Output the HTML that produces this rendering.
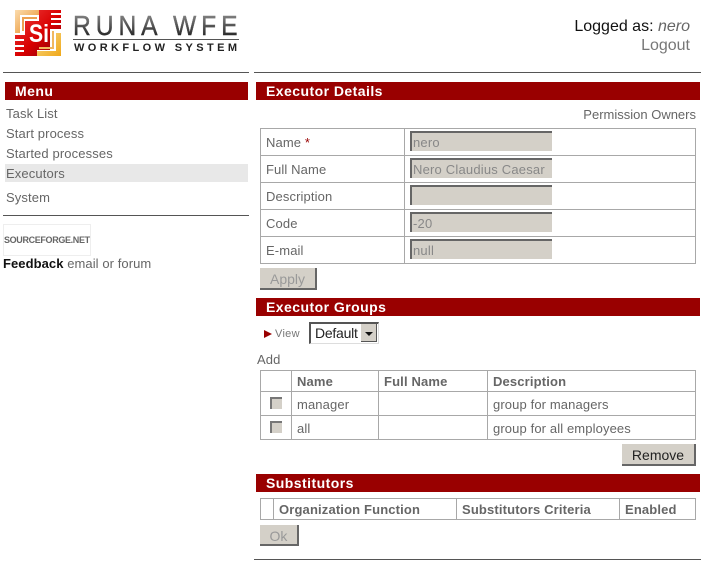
<!DOCTYPE html>
<html><head><meta charset="utf-8"><style>
html,body{margin:0;padding:0;background:#fff;width:707px;height:567px;overflow:hidden}
body{position:relative;font-family:"Liberation Sans",sans-serif;font-size:13px;color:#666}
.a{position:absolute;white-space:nowrap}
.t{position:absolute;white-space:nowrap;letter-spacing:.12px;line-height:14px;margin-top:1px}
.hr{position:absolute;height:1px;background:#555}
.bar{position:absolute;background:#990000;height:18px;color:#fff;font-weight:bold;font-size:14px;line-height:18px;letter-spacing:.45px}
.l{position:absolute;background:#a8a8a8}
.inp{position:absolute;left:410px;width:139px;height:18px;background:#d4d0c8;border-top:2px solid #666;border-left:2px solid #666;color:#888;font-size:13px;padding-left:1px;box-sizing:content-box;line-height:20px;letter-spacing:.2px;white-space:nowrap;overflow:hidden}
.btn{position:absolute;background:#d4d0c8;border-right:2px solid #666;border-bottom:2px solid #666;box-sizing:border-box;text-align:center;font-size:14px;line-height:22px;color:#222;letter-spacing:0}
.dis{color:#999}
.th{position:absolute;white-space:nowrap;font-weight:bold;letter-spacing:.15px;line-height:14px;color:#666;margin-top:1px}
.cb{position:absolute;left:270px;width:10px;height:10px;background:#d4d0c8;border-top:2px solid #777;border-left:2px solid #777}
</style></head><body>

<svg class="a" style="left:15px;top:10px" width="46" height="46" viewBox="0 0 46 46">
<defs>
<linearGradient id="o" x1="0" y1="0" x2="1" y2="1"><stop offset="0" stop-color="#fbdcae"/><stop offset="1" stop-color="#e88a20"/></linearGradient>
<linearGradient id="y" x1="0" y1="0" x2="1" y2="1"><stop offset="0" stop-color="#f7d98a"/><stop offset="1" stop-color="#f0a818"/></linearGradient>
<linearGradient id="r" x1="0" y1="0" x2="1" y2="1"><stop offset="0" stop-color="#f04040"/><stop offset=".55" stop-color="#d80000"/><stop offset="1" stop-color="#800010"/></linearGradient>
</defs>
<path d="M0 0H24V5H5V23H0Z" fill="url(#o)"/>
<path d="M7 7H22V9H9V21H7Z" fill="#eda050"/>
<path d="M24 0H46V3H36V5H46V8H36V10H46V13H36V15H46V19H35V40H22V46H0V42H9V40H0V37H9V35H0V31H9V29H0V25H10V11H24Z" fill="url(#r)"/>
<path d="M41 23H46V46H22V41H41Z" fill="url(#y)"/>
<path d="M37 21H39V39H24V37H37Z" fill="#f0b860"/>
<text x="14" y="32" font-family="Liberation Sans" font-weight="bold" font-size="25" fill="#fff" textLength="20" lengthAdjust="spacingAndGlyphs">Si</text>
</svg>

<svg class="a" style="left:70px;top:10px" width="175" height="46" viewBox="0 0 175 46">
<defs><linearGradient id="g" x1="0" y1="0" x2="0" y2="1"><stop offset="0" stop-color="#999"/><stop offset=".5" stop-color="#555"/><stop offset="1" stop-color="#111"/></linearGradient></defs>
<g transform="translate(3 25) scale(.88 1)"><text x="0" y="0" font-family="Liberation Sans" font-size="28" fill="url(#g)" stroke="url(#g)" stroke-width=".4" textLength="187" lengthAdjust="spacing">RUNA WFE</text></g>
<rect x="3" y="29" width="166" height="1" fill="#555"/>
<text x="4" y="41" font-family="Liberation Sans" font-weight="bold" font-size="11" fill="#222" textLength="163" lengthAdjust="spacing">WORKFLOW SYSTEM</text>
</svg>

<div class="a" style="right:17px;top:17px;font-size:16px;line-height:19px;color:#111">Logged as: <i style="color:#666">nero</i></div>
<div class="a" style="right:17px;top:36px;font-size:16px;line-height:19px;color:#777">Logout</div>

<div class="hr" style="left:3px;top:72px;width:246px"></div>
<div class="hr" style="left:254px;top:72px;width:447px"></div>

<div class="bar" style="left:5px;top:82px;width:233px;padding-left:10px">Menu</div>
<div class="t" style="left:6px;top:106px">Task List</div>
<div class="t" style="left:6px;top:126px">Start process</div>
<div class="t" style="left:6px;top:146px">Started processes</div>
<div class="a" style="left:5px;top:164px;width:243px;height:18px;background:#e8e8e8"></div>
<div class="t" style="left:6px;top:166px">Executors</div>
<div class="t" style="left:6px;top:190px">System</div>
<div class="hr" style="left:3px;top:215px;width:246px"></div>

<div class="a" style="left:3px;top:224px;width:86px;height:30px;border:1px solid #eee"></div>
<div class="a" style="left:4px;top:234px;font-size:9px;line-height:12px;font-weight:bold;color:#666;letter-spacing:-.35px">SOURCEFORGE.NET</div>
<div class="t" style="left:3px;top:256px;letter-spacing:.07px"><b style="color:#111">Feedback</b> email or forum</div>

<div class="bar" style="left:256px;top:82px;width:434px;padding-left:10px">Executor Details</div>
<div class="t" style="right:11px;top:107px;letter-spacing:0">Permission Owners</div>

<!-- details table -->
<div class="l" style="left:260px;top:128px;width:436px;height:1px"></div>
<div class="l" style="left:260px;top:155px;width:436px;height:1px"></div>
<div class="l" style="left:260px;top:182px;width:436px;height:1px"></div>
<div class="l" style="left:260px;top:209px;width:436px;height:1px"></div>
<div class="l" style="left:260px;top:236px;width:436px;height:1px"></div>
<div class="l" style="left:260px;top:263px;width:436px;height:1px"></div>
<div class="l" style="left:260px;top:128px;width:1px;height:136px"></div>
<div class="l" style="left:404px;top:128px;width:1px;height:136px"></div>
<div class="l" style="left:695px;top:128px;width:1px;height:136px"></div>

<div class="t" style="left:266px;top:135px">Name <span style="color:#900">*</span></div>
<div class="t" style="left:266px;top:162px">Full Name</div>
<div class="t" style="left:266px;top:189px">Description</div>
<div class="t" style="left:266px;top:216px">Code</div>
<div class="t" style="left:266px;top:243px">E-mail</div>
<div class="inp" style="top:131px">nero</div>
<div class="inp" style="top:158px">Nero Claudius Caesar</div>
<div class="inp" style="top:185px"></div>
<div class="inp" style="top:212px">-20</div>
<div class="inp" style="top:239px">null</div>

<div class="btn dis" style="left:260px;top:268px;width:57px;height:22px">Apply</div>

<div class="bar" style="left:256px;top:298px;width:434px;padding-left:10px">Executor Groups</div>
<svg class="a" style="left:264px;top:330px" width="8" height="8"><path d="M0 0L8 4L0 8Z" fill="#990000"/></svg>
<div class="a" style="left:275px;top:327px;font-size:11px;line-height:14px;color:#777;letter-spacing:.3px">View</div>
<div class="a" style="left:309px;top:322px;width:67px;height:19px;border-top:2px solid #555;border-left:2px solid #555;border-right:1px solid #ddd;border-bottom:1px solid #ddd;background:#fff"></div>
<div class="a" style="left:315px;top:325px;font-size:14px;line-height:16px;color:#222;letter-spacing:-.25px">Default</div>
<div class="a" style="left:361px;top:324px;width:15px;height:17px;background:#d4d0c8;border-right:1px solid #555;border-bottom:1px solid #555"></div>
<svg class="a" style="left:365px;top:332px" width="8" height="4"><path d="M0 0H8L4 4Z" fill="#111"/></svg>

<div class="t" style="left:257px;top:352px">Add</div>

<!-- groups table -->
<div class="l" style="left:260px;top:370px;width:436px;height:1px"></div>
<div class="l" style="left:260px;top:391px;width:436px;height:1px"></div>
<div class="l" style="left:260px;top:415px;width:436px;height:1px"></div>
<div class="l" style="left:260px;top:439px;width:436px;height:1px"></div>
<div class="l" style="left:260px;top:370px;width:1px;height:70px"></div>
<div class="l" style="left:291px;top:370px;width:1px;height:70px"></div>
<div class="l" style="left:378px;top:370px;width:1px;height:70px"></div>
<div class="l" style="left:487px;top:370px;width:1px;height:70px"></div>
<div class="l" style="left:695px;top:370px;width:1px;height:70px"></div>
<div class="th" style="left:297px;top:374px">Name</div>
<div class="th" style="left:384px;top:374px">Full Name</div>
<div class="th" style="left:493px;top:374px">Description</div>
<div class="cb" style="top:397px"></div>
<div class="cb" style="top:421px"></div>
<div class="t" style="left:297px;top:397px">manager</div>
<div class="t" style="left:297px;top:421px">all</div>
<div class="t" style="left:493px;top:397px">group for managers</div>
<div class="t" style="left:493px;top:421px">group for all employees</div>

<div class="btn" style="left:622px;top:444px;width:74px;height:22px">Remove</div>

<div class="bar" style="left:256px;top:474px;width:434px;padding-left:10px">Substitutors</div>

<!-- substitutors table -->
<div class="l" style="left:260px;top:498px;width:436px;height:1px"></div>
<div class="l" style="left:260px;top:519px;width:436px;height:1px"></div>
<div class="l" style="left:260px;top:498px;width:1px;height:22px"></div>
<div class="l" style="left:273px;top:498px;width:1px;height:22px"></div>
<div class="l" style="left:456px;top:498px;width:1px;height:22px"></div>
<div class="l" style="left:619px;top:498px;width:1px;height:22px"></div>
<div class="l" style="left:695px;top:498px;width:1px;height:22px"></div>
<div class="th" style="left:279px;top:502px">Organization Function</div>
<div class="th" style="left:462px;top:502px">Substitutors Criteria</div>
<div class="th" style="left:625px;top:502px">Enabled</div>

<div class="btn dis" style="left:260px;top:525px;width:39px;height:21px">Ok</div>

<div class="hr" style="left:254px;top:559px;width:447px"></div>
</body></html>
